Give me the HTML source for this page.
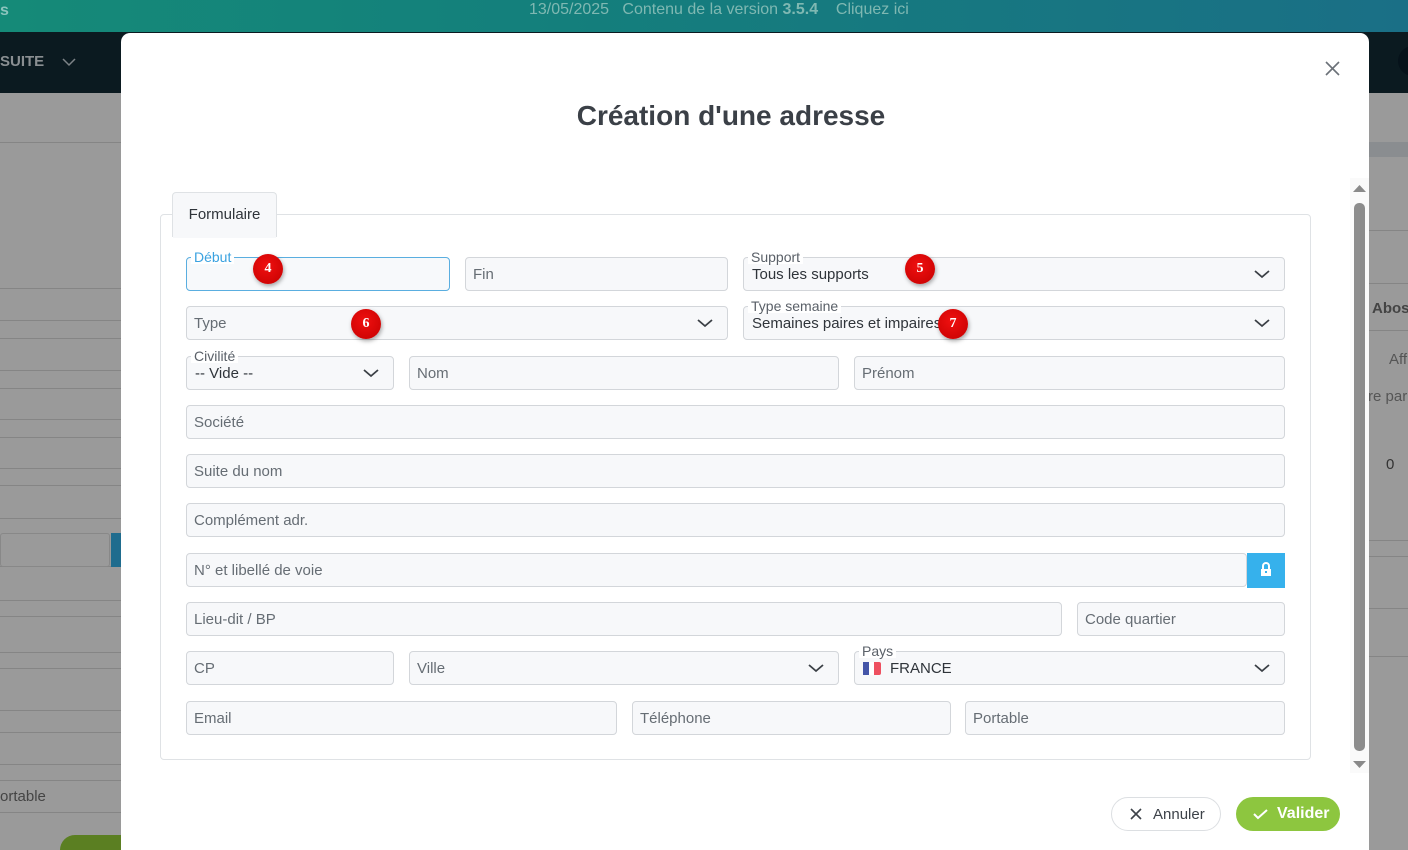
<!DOCTYPE html>
<html><head><meta charset="utf-8">
<style>
*{box-sizing:border-box;margin:0;padding:0}
html,body{width:1408px;height:850px;overflow:hidden}
body{position:relative;background:#9a9a9a;font-family:"Liberation Sans",Arial,sans-serif;color:#3d4249}
.abs{position:absolute}
.top{left:0;top:0;width:1408px;height:32px;background:linear-gradient(90deg,#158a78,#147f7c 40%,#1a6f86);color:#7fb8b2;font-size:16px}
.nav{left:0;top:32px;width:1408px;height:61px;background:#0b1a20}
.line{position:absolute;left:0;width:121px;height:1px;background:#858585}
.rline{position:absolute;left:1369px;width:39px;height:1px;background:#858585}
.modal{left:121px;top:33px;width:1248px;height:817px;background:#fff;border-radius:9px 9px 0 0}
.f{position:absolute;height:34px;background:#f7f8fa;border:1px solid #d3d6da;border-radius:4px;font-size:15px;color:#666d74;padding:0 7px;line-height:34px}
.lab{position:absolute;font-size:14px;color:#5a6068;background:#fff;padding:0 3px;line-height:14px;top:-8px;left:4px}
.val{position:absolute;left:8px;top:9px;line-height:16px;color:#2f343a;font-size:15px}
.chev{position:absolute;right:14px;top:11px;width:16px;height:10px}
.badge{position:absolute;width:30px;height:30px;border-radius:50%;background:radial-gradient(circle at 45% 40%,#f01010,#c40000);color:#fff;font-family:"Liberation Serif",serif;font-weight:bold;font-size:14px;text-align:center;line-height:30px;box-shadow:1px 2px 4px rgba(0,0,0,.35)}
</style></head><body>
<div class="abs top"><span class="abs" style="left:0;top:2px;font-weight:bold;color:#8cc4bd">s</span><span class="abs" style="left:529px;top:1px">13/05/2025&nbsp;&nbsp;&nbsp;Contenu de la version <b>3.5.4</b>&nbsp;&nbsp;&nbsp;&nbsp;Cliquez ici</span></div>
<div class="abs nav"><span class="abs" style="left:0;top:21px;color:#8a8f92;font-weight:bold;font-size:15px">SUITE</span>
<svg class="abs" style="left:62px;top:25px" width="14" height="10"><path d="M1 2l6 6 6-6" stroke="#7d8387" fill="none" stroke-width="1.5"/></svg>
<div class="abs" style="left:1398px;top:14px;width:30px;height:30px;border-radius:50%;background:#06121a"></div></div>
<div class="line" style="top:142px"></div><div class="line" style="top:288px"></div><div class="line" style="top:320px"></div><div class="line" style="top:338px"></div><div class="line" style="top:370px"></div><div class="line" style="top:388px"></div><div class="line" style="top:419px"></div><div class="line" style="top:437px"></div><div class="line" style="top:468px"></div><div class="line" style="top:485px"></div><div class="line" style="top:518px"></div><div class="line" style="top:566px"></div><div class="line" style="top:600px"></div><div class="line" style="top:616px"></div><div class="line" style="top:652px"></div><div class="line" style="top:668px"></div><div class="line" style="top:710px"></div><div class="line" style="top:732px"></div><div class="line" style="top:764px"></div><div class="line" style="top:780px"></div><div class="line" style="top:812px"></div>
<div class="abs" style="left:0;top:533px;width:110px;height:34px;border:1px solid #888;border-radius:3px"></div>
<div class="abs" style="left:111px;top:533px;width:10px;height:34px;background:#1f6c8e"></div>
<div class="abs" style="left:0;top:788px;font-size:15px;color:#444">ortable</div>
<div class="abs" style="left:60px;top:835px;width:80px;height:15px;border-radius:15px 0 0 0;background:#5b7f22"></div>
<div class="rline" style="top:142px;height:15px;background:#8a8d90"></div><div class="rline" style="top:230px"></div><div class="rline" style="top:283px"></div><div class="rline" style="top:330px"></div><div class="rline" style="top:540px"></div><div class="rline" style="top:556px"></div><div class="rline" style="top:608px"></div><div class="rline" style="top:656px"></div>
<div class="abs" style="left:1372px;top:300px;font-size:15px;font-weight:bold;color:#444">Abos</div>
<div class="abs" style="left:1389px;top:351px;font-size:15px;color:#555">Aff</div>
<div class="abs" style="left:1368px;top:388px;font-size:15px;color:#555">re par</div>
<div class="abs" style="left:1386px;top:456px;font-size:15px;color:#333">0</div>

<div class="abs modal"></div>
<svg class="abs" style="left:1325px;top:61px" width="15" height="15"><path d="M1 1l13 13M14 1L1 14" stroke="#6b7178" stroke-width="1.6"/></svg>
<div class="abs" style="left:0;width:1462px;top:100px;text-align:center;font-size:28px;font-weight:bold;color:#3b4047">Création d'une adresse</div>

<div class="abs" style="left:160px;top:214px;width:1151px;height:546px;border:1px solid #dfe2e5;border-radius:4px"></div>
<div class="abs" style="left:172px;top:192px;width:105px;height:45px;border:1px solid #dfe2e5;border-bottom:none;border-radius:4px 4px 0 0;background:#f7f8fa;font-size:15px;color:#2f343a;text-align:center;line-height:44px">Formulaire</div>
<div class="abs" style="left:173px;top:235px;width:103px;height:3px;background:#f7f8fa"></div>

<div class="f" style="left:186px;top:257px;width:264px;border-color:#5aaee0;background:#f7f9fb"><span class="lab" style="color:#3aa2e0">Début</span></div>
<div class="f" style="left:465px;top:257px;width:263px">Fin</div>
<div class="f" style="left:743px;top:257px;width:542px"><span class="lab">Support</span><span class="val">Tous les supports</span><svg class="chev" viewBox="0 0 16 10"><path d="M1 2l7 6 7-6" stroke="#3a3f45" fill="none" stroke-width="1.8"/></svg></div>
<div class="f" style="left:186px;top:306px;width:542px">Type<svg class="chev" viewBox="0 0 16 10"><path d="M1 2l7 6 7-6" stroke="#3a3f45" fill="none" stroke-width="1.8"/></svg></div>
<div class="f" style="left:743px;top:306px;width:542px"><span class="lab">Type semaine</span><span class="val">Semaines paires et impaires</span><svg class="chev" viewBox="0 0 16 10"><path d="M1 2l7 6 7-6" stroke="#3a3f45" fill="none" stroke-width="1.8"/></svg></div>
<div class="f" style="left:186px;top:356px;width:208px"><span class="lab">Civilité</span><span class="val">-- Vide --</span><svg class="chev" viewBox="0 0 16 10"><path d="M1 2l7 6 7-6" stroke="#3a3f45" fill="none" stroke-width="1.8"/></svg></div>
<div class="f" style="left:409px;top:356px;width:430px">Nom</div>
<div class="f" style="left:854px;top:356px;width:431px">Prénom</div>
<div class="f" style="left:186px;top:405px;width:1099px">Société</div>
<div class="f" style="left:186px;top:454px;width:1099px">Suite du nom</div>
<div class="f" style="left:186px;top:503px;width:1099px">Complément adr.</div>
<div class="f" style="left:186px;top:553px;width:1061px">N° et libellé de voie</div>
<div class="abs" style="left:1247px;top:553px;width:38px;height:35px;background:#36b1ec"></div>
<svg class="abs" style="left:1259px;top:561px" width="14" height="16"><path d="M4 8V5a3 3 0 0 1 6 0v3" stroke="#fff" stroke-width="2" fill="none"/><rect x="2" y="8" width="10" height="7" fill="#fff"/><rect x="6" y="10" width="2" height="2" fill="#36b1ec"/></svg>
<div class="f" style="left:186px;top:602px;width:876px">Lieu-dit / BP</div>
<div class="f" style="left:1077px;top:602px;width:208px">Code quartier</div>
<div class="f" style="left:186px;top:651px;width:208px">CP</div>
<div class="f" style="left:409px;top:651px;width:430px">Ville<svg class="chev" viewBox="0 0 16 10"><path d="M1 2l7 6 7-6" stroke="#3a3f45" fill="none" stroke-width="1.8"/></svg></div>
<div class="f" style="left:854px;top:651px;width:431px"><span class="lab">Pays</span><span class="abs" style="left:8px;top:10px;width:6px;height:13px;background:#4455a8"></span><span class="abs" style="left:14px;top:10px;width:5px;height:13px;background:#fff"></span><span class="abs" style="left:19px;top:10px;width:7px;height:13px;background:#ee5060;border-radius:0 2px 2px 0"></span><span class="val" style="left:35px">FRANCE</span><svg class="chev" viewBox="0 0 16 10"><path d="M1 2l7 6 7-6" stroke="#3a3f45" fill="none" stroke-width="1.8"/></svg></div>
<div class="f" style="left:186px;top:701px;width:431px">Email</div>
<div class="f" style="left:632px;top:701px;width:319px">Téléphone</div>
<div class="f" style="left:965px;top:701px;width:320px">Portable</div>

<div class="badge" style="left:253px;top:254px">4</div>
<div class="badge" style="left:905px;top:254px">5</div>
<div class="badge" style="left:351px;top:309px">6</div>
<div class="badge" style="left:938px;top:309px">7</div>

<div class="abs" style="left:1350px;top:178px;width:19px;height:595px;background:#fafafa"></div>
<svg class="abs" style="left:1353px;top:183px" width="13" height="10"><path d="M0 9L6.5 2 13 9z" fill="#8a8a8a"/></svg>
<div class="abs" style="left:1354px;top:203px;width:11px;height:548px;background:#8c8c8c;border-radius:5px"></div>
<svg class="abs" style="left:1353px;top:760px" width="13" height="10"><path d="M0 1L6.5 8 13 1z" fill="#8a8a8a"/></svg>

<div class="abs" style="left:1111px;top:797px;width:110px;height:34px;border:1px solid #dcdfe2;border-radius:17px;font-size:15px;color:#3d4249;line-height:33px;padding-left:41px">Annuler</div>
<svg class="abs" style="left:1130px;top:808px" width="12" height="12"><path d="M1 1l10 10M11 1L1 11" stroke="#3d4249" stroke-width="1.6"/></svg>
<div class="abs" style="left:1236px;top:797px;width:104px;height:34px;background:#8dc63f;border-radius:17px;font-size:16px;font-weight:bold;color:#fff;line-height:34px;padding-left:41px">Valider</div>
<svg class="abs" style="left:1253px;top:808px" width="15" height="12"><path d="M1 6l4 4 9-8" stroke="#fff" stroke-width="2" fill="none"/></svg>
</body></html>
